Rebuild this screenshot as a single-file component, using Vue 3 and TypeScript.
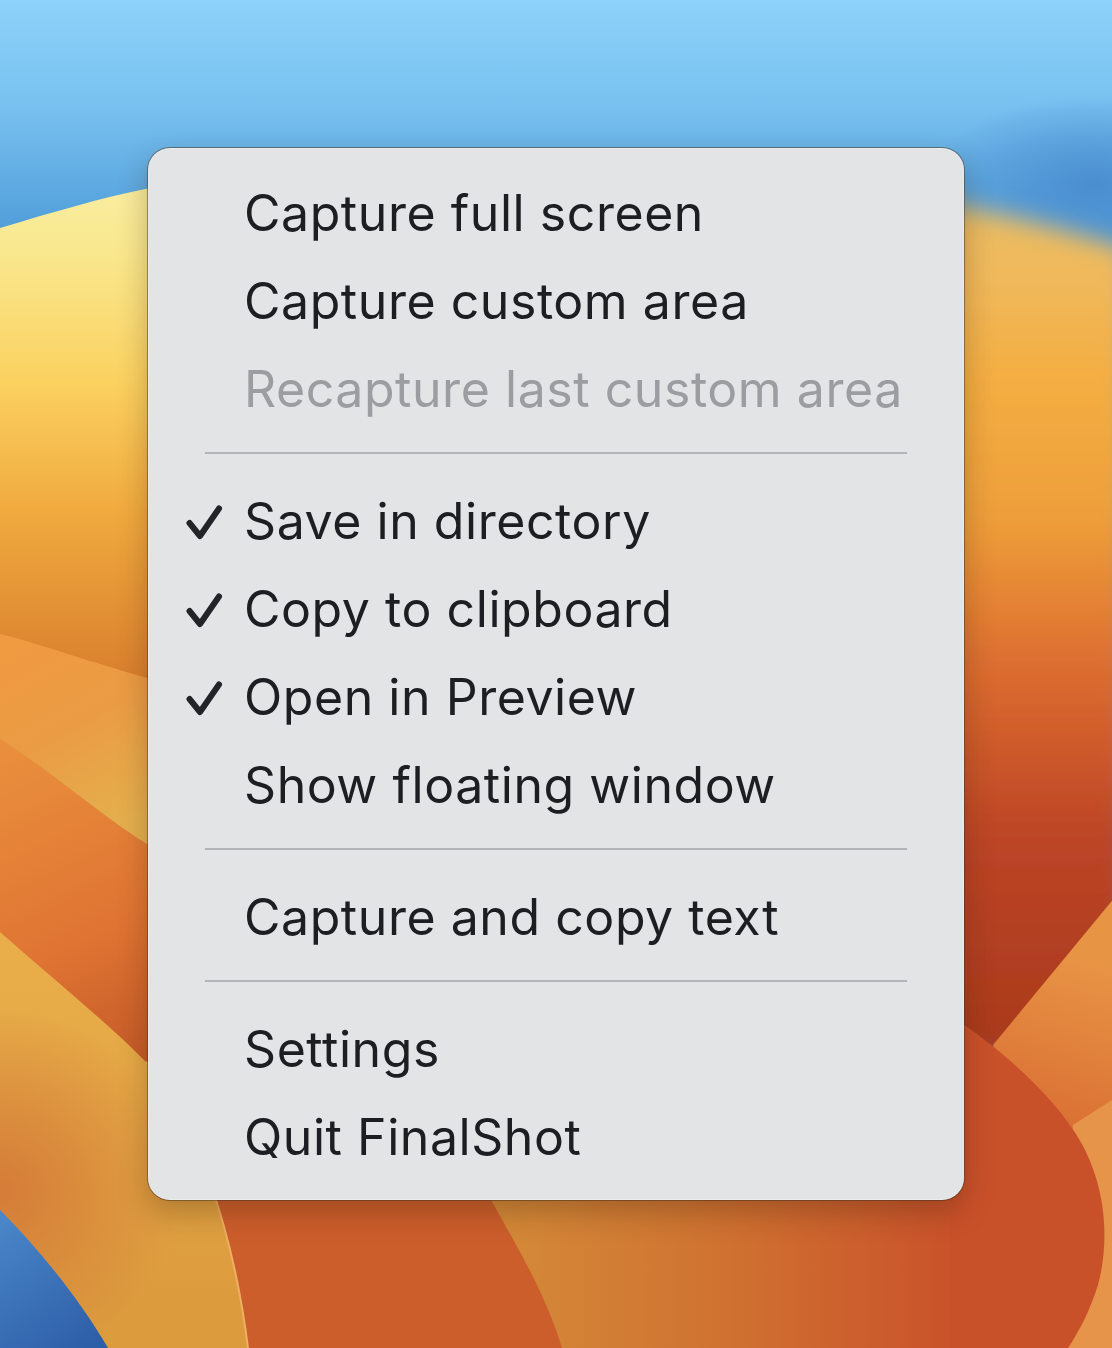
<template>
  <div class="desktop">
    <svg class="wallpaper" viewBox="0 0 1112 1348" aria-hidden="true">
      <defs>
        <linearGradient id="sky" gradientUnits="userSpaceOnUse" x1="0" y1="0" x2="0" y2="235">
          <stop offset="0" stop-color="#8dd2fa" />
          <stop offset="0.45" stop-color="#78c1f0" />
          <stop offset="1" stop-color="#4f9cd8" />
        </linearGradient>
        <radialGradient id="skyDark" gradientUnits="userSpaceOnUse" cx="0" cy="0" r="1" gradientTransform="translate(1095 185) scale(170 90)">
          <stop offset="0" stop-color="#4a8ccf" stop-opacity="0.95" />
          <stop offset="1" stop-color="#4a8ccf" stop-opacity="0" />
        </radialGradient>
        <linearGradient id="hillLeft" gradientUnits="userSpaceOnUse" x1="0" y1="200" x2="0" y2="680">
          <stop offset="0" stop-color="#f9ec9c" />
          <stop offset="0.12" stop-color="#f9e78c" />
          <stop offset="0.38" stop-color="#fbd160" />
          <stop offset="0.65" stop-color="#f0aa3e" />
          <stop offset="1" stop-color="#d97f2e" />
        </linearGradient>
        <linearGradient id="hillRight" gradientUnits="userSpaceOnUse" x1="0" y1="190" x2="0" y2="1050">
          <stop offset="0" stop-color="#e8bd62" />
          <stop offset="0.1" stop-color="#f0b95c" />
          <stop offset="0.22" stop-color="#f4ae42" />
          <stop offset="0.38" stop-color="#ee9f3a" />
          <stop offset="0.55" stop-color="#dd6e30" />
          <stop offset="0.75" stop-color="#bd4526" />
          <stop offset="1" stop-color="#a9391c" />
        </linearGradient>
        <linearGradient id="bandA" gradientUnits="userSpaceOnUse" x1="20" y1="650" x2="120" y2="830">
          <stop offset="0" stop-color="#f09a42" />
          <stop offset="0.45" stop-color="#ea9c44" />
          <stop offset="1" stop-color="#e4b04e" />
        </linearGradient>
        <linearGradient id="bandB" gradientUnits="userSpaceOnUse" x1="0" y1="760" x2="140" y2="1060">
          <stop offset="0" stop-color="#e98e3c" />
          <stop offset="0.6" stop-color="#df7433" />
          <stop offset="1" stop-color="#c55a28" />
        </linearGradient>
        <linearGradient id="petal" gradientUnits="userSpaceOnUse" x1="0" y1="950" x2="0" y2="1300">
          <stop offset="0" stop-color="#e9ae4a" />
          <stop offset="1" stop-color="#dc9c3e" />
        </linearGradient>
        <radialGradient id="petalShade" gradientUnits="userSpaceOnUse" cx="0" cy="1190" r="180">
          <stop offset="0" stop-color="#d47a38" stop-opacity="0.95" />
          <stop offset="1" stop-color="#d47a38" stop-opacity="0" />
        </radialGradient>
        <linearGradient id="blue" gradientUnits="userSpaceOnUse" x1="0" y1="1220" x2="90" y2="1348">
          <stop offset="0" stop-color="#4a86c8" />
          <stop offset="1" stop-color="#2d5ea8" />
        </linearGradient>
        <linearGradient id="fold" gradientUnits="userSpaceOnUse" x1="500" y1="0" x2="960" y2="0">
          <stop offset="0" stop-color="#d48a38" />
          <stop offset="0.5" stop-color="#cf7131" />
          <stop offset="1" stop-color="#c9512a" />
        </linearGradient>
        <linearGradient id="wedge" gradientUnits="userSpaceOnUse" x1="1090" y1="960" x2="1040" y2="1120">
          <stop offset="0" stop-color="#e89445" />
          <stop offset="1" stop-color="#da7034" />
        </linearGradient>
        <filter id="soft" x="-10%" y="-10%" width="120%" height="120%">
          <feGaussianBlur stdDeviation="12" />
        </filter>
      </defs>

      <rect width="1112" height="1348" fill="url(#sky)" />
      <rect width="1112" height="400" fill="url(#skyDark)" />

      <!-- right side of the hill is out of focus -->
      <path d="M600 175 C760 175 950 190 1130 250 V1060 H600 Z" fill="url(#hillRight)" filter="url(#soft)" />
      <path d="M0 228 C50 213 100 198 150 188 L300 165 V1000 H0 Z" fill="url(#hillLeft)" />

      <path d="M0 634 C50 646 100 668 300 720 V1080 H0 Z" fill="url(#bandA)" />
      <path d="M0 739 C50 770 100 815 150 846 L300 940 V1200 H0 Z" fill="url(#bandB)" />

      <path d="M140 1100 H1000 V1348 H240 Z" fill="#cc5e2b" />
      <path d="M480 1180 H1000 V1348 H562 C545 1290 510 1235 480 1180 Z" fill="url(#fold)" />

      <path d="M0 932 C60 985 110 1025 146 1062 C190 1110 232 1220 248 1348 H0 Z" fill="url(#petal)" />
      <path d="M0 932 C60 985 110 1025 146 1062 C190 1110 232 1220 248 1348 H0 Z" fill="url(#petalShade)" />
      <path d="M146 1062 C190 1110 232 1220 248 1348" fill="none" stroke="#eeb062" stroke-width="2" />
      <path d="M0 1210 C40 1250 80 1300 108 1348 H0 Z" fill="url(#blue)" />

      <path d="M993 1045 L1125 885 V1348 H1060 Z" fill="url(#wedge)" />
      <path d="M1073 1125 L1112 1100 V1348 H1060 Z" fill="#e6944a" />
      <path d="M950 1015 C1000 1048 1060 1100 1085 1150 C1105 1190 1110 1240 1098 1285 C1090 1310 1080 1330 1068 1348 H950 Z" fill="#c9512a" />
    </svg>

    <div class="menu">
      <template v-for="(group, g) in groups" :key="g">
        <hr v-if="g > 0" class="separator" />
        <div
          v-for="item in group"
          :key="item.label"
          class="item"
          :class="{ disabled: item.disabled }"
        >
          <svg v-if="item.checked" class="check" viewBox="0 0 36 36" aria-hidden="true">
            <path d="M3.5 20 L14 33 L33 5.5" />
          </svg>
          <span class="label">{{ item.label }}</span>
        </div>
      </template>
    </div>
  </div>
</template>

<script setup lang="ts">
interface MenuItem {
  label: string;
  checked?: boolean;
  disabled?: boolean;
}

const groups: MenuItem[][] = [
  [
    { label: 'Capture full screen' },
    { label: 'Capture custom area' },
    { label: 'Recapture last custom area', disabled: true },
  ],
  [
    { label: 'Save in directory', checked: true },
    { label: 'Copy to clipboard', checked: true },
    { label: 'Open in Preview', checked: true },
    { label: 'Show floating window' },
  ],
  [{ label: 'Capture and copy text' }],
  [{ label: 'Settings' }, { label: 'Quit FinalShot' }],
];
</script>

<style scoped>
.desktop {
  position: relative;
  width: 1112px;
  height: 1348px;
  padding: 148px 148px 0;
  box-sizing: border-box;
  overflow: hidden;
}

.wallpaper {
  position: absolute;
  inset: 0;
  width: 100%;
  height: 100%;
  display: block;
}

.menu {
  position: relative;
  width: 816px;
  height: 1052px;
  box-sizing: border-box;
  padding: 21px 0 19px;
  background: #e2e4e6;
  border-radius: 22px;
  box-shadow:
    0 0 0 1px rgba(70, 50, 30, 0.5),
    inset 0 0 0 1px rgba(255, 255, 255, 0.25),
    0 12px 30px rgba(60, 30, 10, 0.3);
}

.item {
  position: relative;
  height: 88px;
  padding-left: 96px;
  display: flex;
  align-items: center;
  font-family: Inter, "Liberation Sans", sans-serif;
  font-size: 50px;
  font-weight: 400;
  letter-spacing: 0.55px;
  color: #1d1e21;
  white-space: nowrap;
}

.item.disabled {
  color: #9c9da0;
}

.check {
  position: absolute;
  left: 38px;
  top: 26px;
  width: 36px;
  height: 36px;
  overflow: visible;
}

.check path {
  fill: none;
  stroke: #232427;
  stroke-width: 6;
  stroke-linecap: round;
  stroke-linejoin: round;
}

.separator {
  height: 2px;
  margin: 19px 57px 23px;
  border: 0;
  background: #b3b4b7;
}
</style>
